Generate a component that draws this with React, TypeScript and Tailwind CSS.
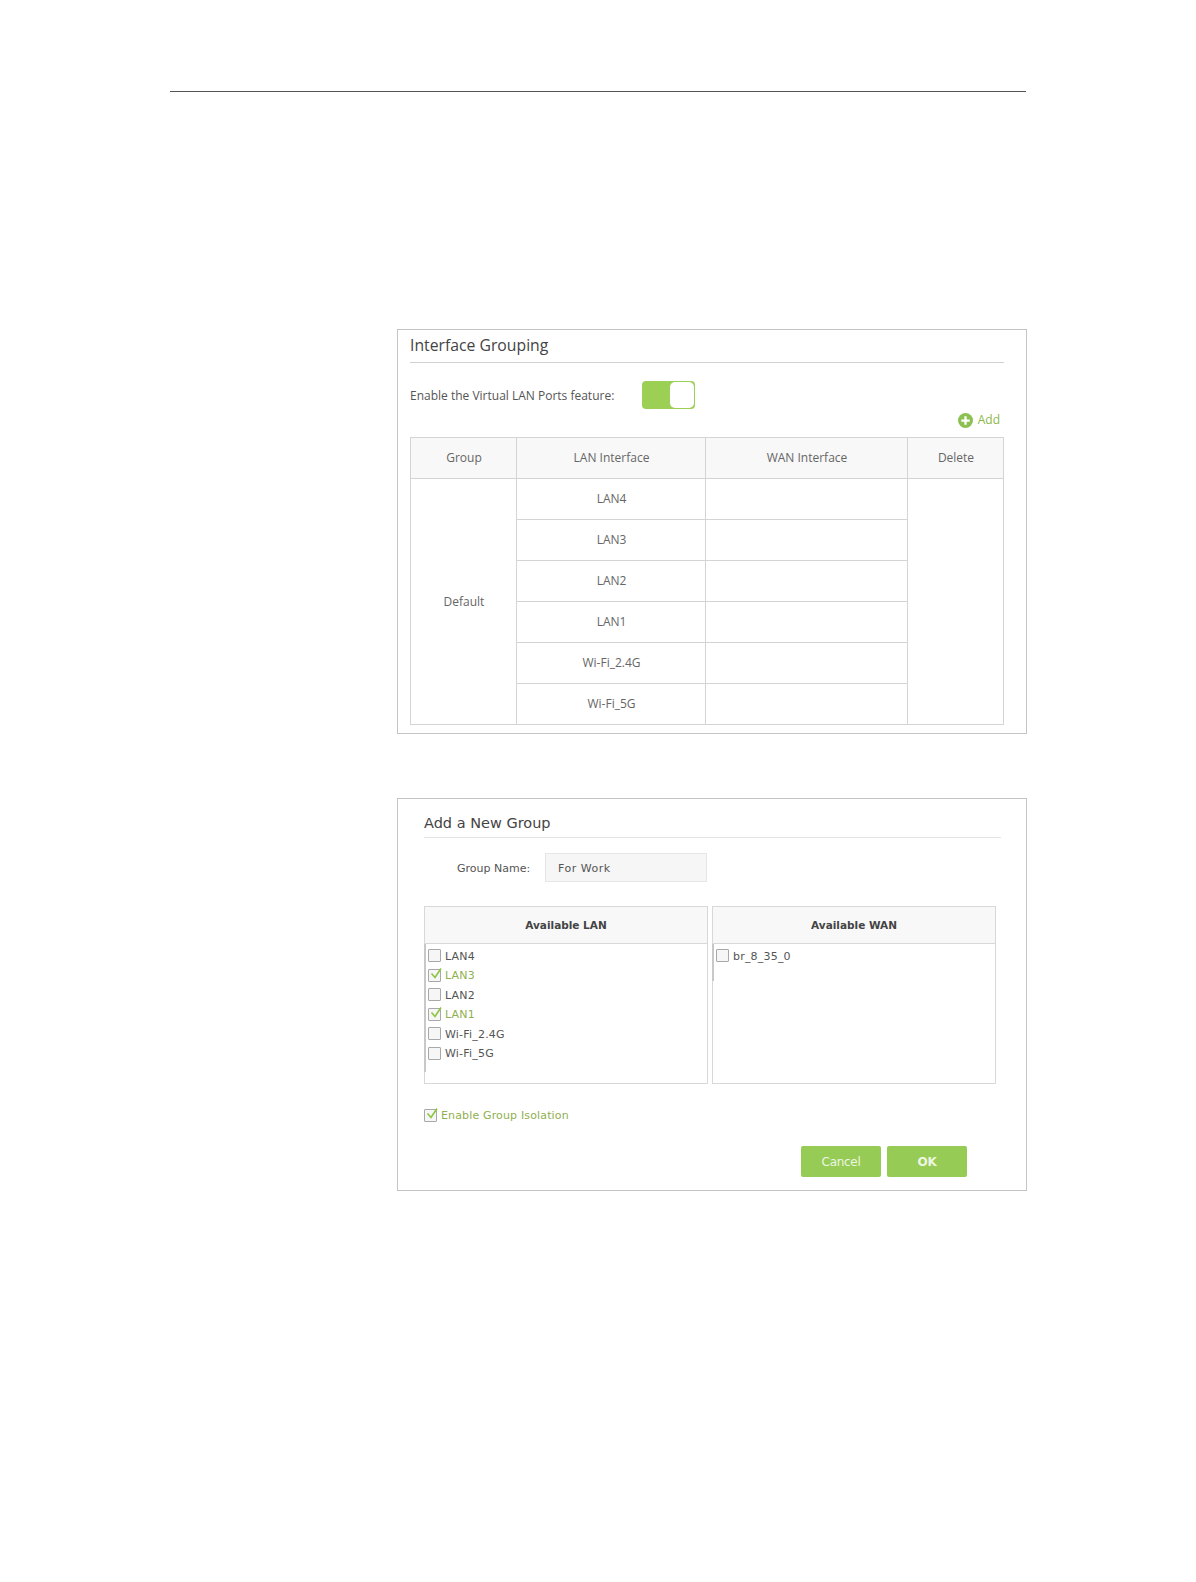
const Check = ({ on, up }: { on?: boolean; up?: boolean }) => (
  <span className={`relative block h-[13px] w-[13px] shrink-0 rounded-[1px] border border-[#a8a8a8] bg-[#f6f6f6] ${up ? "mb-[1px]" : "mb-[2px]"}`}>
    {on && (
      <svg viewBox="0 0 14 14" className="absolute left-0 top-[-3px] h-[14px] w-[14px]" fill="none">
        <path d="M2.5 6.5 L6 10.5 L12 1.5" stroke="#8cc63f" strokeWidth="1.6" />
      </svg>
    )}
  </span>
);

const Item = ({ label, on }: { label: string; on?: boolean }) => (
  <div className={`flex h-[19.5px] items-center gap-[4px] pl-[3px] tracking-[0.2px] ${on ? "text-[#8fb04f]" : "text-[#555555]"}`}>
    <Check on={on} />
    <span>{label}</span>
  </div>
);

const Column = ({ title, items, bar, gap }: { title: string; items: { label: string; on?: boolean }[]; bar: string; gap: string }) => (
  <div className={`h-[178px] w-[284px] border border-[#d8d8d8] ${gap}`}>
    <div className="flex h-[37px] items-center justify-center border-b border-[#d8d8d8] bg-[#f8f8f8] pt-[1px] text-[10.5px] font-bold text-[#444444]">
      {title}
    </div>
    <div className="relative pt-[3px]">
      <div className={`absolute left-[-1px] top-0 w-[2px] bg-[#c8c8c8] ${bar}`} />
      {items.map((i) => (
        <Item key={i.label} label={i.label} on={i.on} />
      ))}
    </div>
  </div>
);

const rows = ["LAN4", "LAN3", "LAN2", "LAN1", "Wi-Fi_2.4G", "Wi-Fi_5G"];
const th = "border border-[#d4d4d4] bg-[#f8f8f8] pl-[1px] font-normal";
const td = "h-[41px] border border-[#d4d4d4] p-0 pl-[1px] text-center";

export default function App() {
  return (
    <div className="min-h-[1582px] bg-white pt-[91px]">
      <div className="ml-[170px] w-[856px] border-t border-[#555555]" />

      <section className="ml-[397px] mt-[237px] h-[405px] w-[630px] border border-[#c4c4c4] pl-[12px] pr-[22px] pt-[1px] font-['Open_Sans',sans-serif] text-[12px] text-[#666666]">
        <h2 className="flex h-[32px] items-center border-b border-[#d0d0d0] pb-[2px] text-[15.75px] leading-none text-[#444444]">
          Interface Grouping
        </h2>
        <div className="mt-[18px] flex h-[28px] items-center">
          <span className="w-[232px] pt-[1px] text-[#555555]">Enable the Virtual LAN Ports feature:</span>
          <span className="flex h-[28px] w-[53px] justify-end rounded-[4px] bg-[#9bd055] p-[1px]">
            <span className="block h-[26px] w-[24px] rounded-[5px] bg-white" />
          </span>
        </div>
        <div className="mr-[4px] mt-[2px] flex h-[18px] items-center justify-end gap-[5px] text-[#8cb84a]">
          <svg viewBox="0 0 16 16" className="h-[15px] w-[15px]">
            <circle cx="8" cy="8" r="8" fill="#8cc152" />
            <path d="M8 3.5v9M3.5 8h9" stroke="#fff" strokeWidth="2.4" />
          </svg>
          <span>Add</span>
        </div>
        <table className="mt-[8px] w-[594px] table-fixed border-collapse">
          <thead>
            <tr className="h-[41px]">
              <th className={`w-[106px] ${th}`}>Group</th>
              <th className={`w-[189px] ${th}`}>LAN Interface</th>
              <th className={`w-[202px] ${th}`}>WAN Interface</th>
              <th className={th}>Delete</th>
            </tr>
          </thead>
          <tbody>
            {rows.map((r, i) => (
              <tr key={r}>
                {i === 0 && <td rowSpan={6} className={td}>Default</td>}
                <td className={td}>{r}</td>
                <td className={td} />
                {i === 0 && <td rowSpan={6} className={td} />}
              </tr>
            ))}
          </tbody>
        </table>
      </section>

      <section className="ml-[397px] mt-[64px] h-[393px] w-[630px] border border-[#c4c4c4] pl-[26px] pr-[25px] font-['DejaVu_Sans',sans-serif] text-[11px] text-[#555555]">
        <h2 className="flex h-[39px] items-end border-b border-[#e4e4e4] pb-[7px] text-[14.5px] leading-none text-[#444444]">
          Add a New Group
        </h2>
        <div className="mt-[15px] flex items-center">
          <span className="ml-[33px] w-[88px] pt-[4px]">Group Name:</span>
          <span className="flex h-[29px] w-[162px] items-center border border-[#e6e6e6] bg-[#f6f6f6] pl-[12px] pt-[3px] tracking-[0.5px]">For Work</span>
        </div>
        <div className="mt-[24px] flex">
          <Column
            title="Available LAN"
            bar="h-[128px]"
            gap="mr-[4px]"
            items={[
              { label: "LAN4" },
              { label: "LAN3", on: true },
              { label: "LAN2" },
              { label: "LAN1", on: true },
              { label: "Wi-Fi_2.4G" },
              { label: "Wi-Fi_5G" },
            ]}
          />
          <Column title="Available WAN" bar="h-[37px]" gap="" items={[{ label: "br_8_35_0" }]} />
        </div>
        <div className="mt-[24px] flex h-[16px] items-center gap-[4px] tracking-[0.15px] text-[#8fb04f]">
          <Check on up />
          <span>Enable Group Isolation</span>
        </div>
        <div className="mr-[34px] mt-[22px] flex justify-end gap-[6px]">
          <button className="h-[31px] w-[80px] rounded-[2px] bg-[#96cb55] pt-[1px] text-[12px] tracking-[-0.3px] text-[#eef6e2]">Cancel</button>
          <button className="h-[31px] w-[80px] rounded-[2px] bg-[#96cb55] pt-[1px] text-[12px] font-bold tracking-[-0.3px] text-[#eef6e2]">OK</button>
        </div>
      </section>
    </div>
  );
}
